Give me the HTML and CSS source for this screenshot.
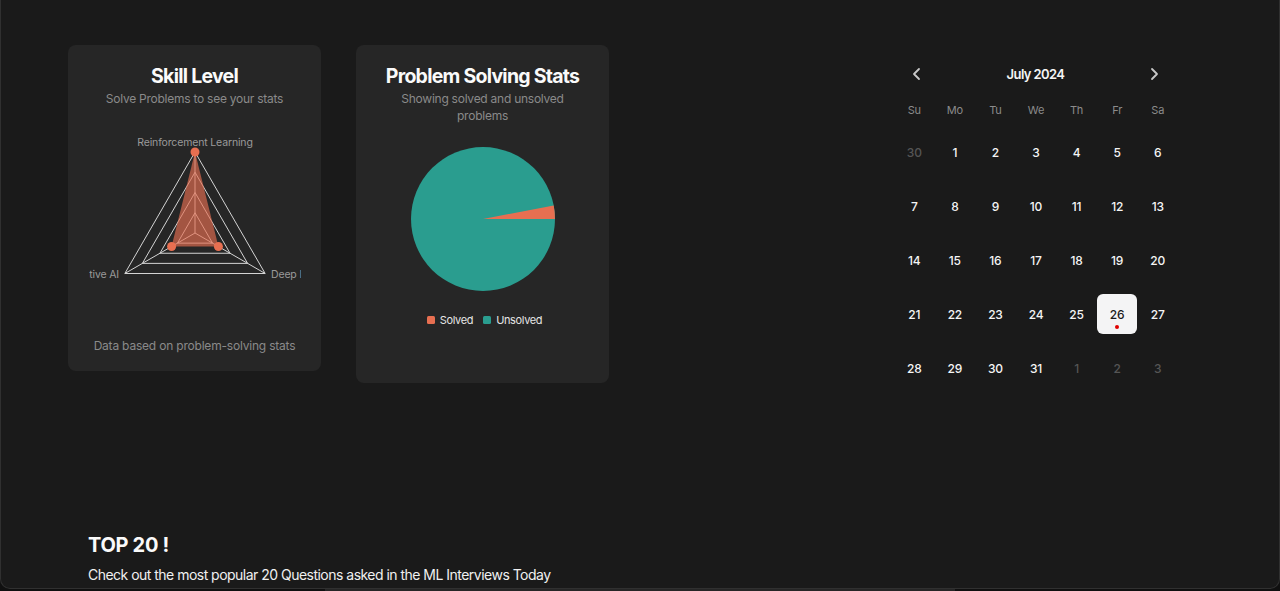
FILE: index.html
```html
<!DOCTYPE html>
<html lang="en">
<head>
<meta charset="utf-8">
<title>Dashboard</title>
<link rel="stylesheet" href="styles.css">
</head>
<body>
<div class="panel">
  <div class="top-row">
    <section class="card card-skill">
      <h2 class="card-title">Skill Level</h2>
      <p class="card-sub">Solve Problems to see your stats</p>
      <svg class="radar" width="212" height="180" viewBox="0 0 212 180">
        <g class="grid">
          <polygon points="106,32 35.85,153.5 176.15,153.5"/>
          <polygon points="106,52.25 53.39,143.38 158.61,143.38"/>
          <polygon points="106,72.5 70.93,133.25 141.07,133.25"/>
          <polygon points="106,92.75 88.46,123.13 123.54,123.13"/>
          <line x1="106" y1="113" x2="106" y2="32"/>
          <line x1="106" y1="113" x2="35.85" y2="153.5"/>
          <line x1="106" y1="113" x2="176.15" y2="153.5"/>
        </g>
        <polygon class="area" points="106,32 82.6,126.5 129.4,126.5"/>
        <circle class="dot" cx="106" cy="32" r="4.5"/>
        <circle class="dot" cx="82.6" cy="126.5" r="4.5"/>
        <circle class="dot" cx="129.4" cy="126.5" r="4.5"/>
        <text class="axis-label" x="106" y="25.5" text-anchor="middle">Reinforcement Learning</text>
        <text class="axis-label" x="30" y="158" text-anchor="end">Generative AI</text>
        <text class="axis-label" x="182" y="158" text-anchor="start">Deep Learning</text>
      </svg>
      <p class="card-foot">Data based on problem-solving stats</p>
    </section>
    <section class="card card-pie">
      <h2 class="card-title">Problem Solving Stats</h2>
      <p class="card-sub narrow">Showing solved and unsolved problems</p>
      <svg class="pie" width="200" height="160" viewBox="0 0 200 160">
        <circle cx="100" cy="80" r="72" fill="#2a9d8f"/>
        <path d="M100 80 L172 80 A72 72 0 0 0 170.7 66.5 Z" fill="#e76f51"/>
      </svg>
      <div class="legend">
        <span class="legend-item"><i class="swatch swatch-solved"></i>Solved</span>
        <span class="legend-item"><i class="swatch swatch-unsolved"></i>Unsolved</span>
      </div>
    </section>
    <section class="calendar">
      <div class="cal-head">
        <button class="nav-btn" aria-label="Previous month">
          <svg width="16" height="16" viewBox="0 0 16 16"><path d="M10 3 L5 8 L10 13" /></svg>
        </button>
        <span class="cal-month">July 2024</span>
        <button class="nav-btn" aria-label="Next month">
          <svg width="16" height="16" viewBox="0 0 16 16"><path d="M6 3 L11 8 L6 13" /></svg>
        </button>
      </div>
      <div class="cal-weekdays">
        <span>Su</span><span>Mo</span><span>Tu</span><span>We</span><span>Th</span><span>Fr</span><span>Sa</span>
      </div>
      <div class="cal-days">
        <span class="day outside">30</span><span class="day">1</span><span class="day">2</span><span class="day">3</span><span class="day">4</span><span class="day">5</span><span class="day">6</span>
        <span class="day">7</span><span class="day">8</span><span class="day">9</span><span class="day">10</span><span class="day">11</span><span class="day">12</span><span class="day">13</span>
        <span class="day">14</span><span class="day">15</span><span class="day">16</span><span class="day">17</span><span class="day">18</span><span class="day">19</span><span class="day">20</span>
        <span class="day">21</span><span class="day">22</span><span class="day">23</span><span class="day">24</span><span class="day">25</span><span class="day today">26<i class="today-dot"></i></span><span class="day">27</span>
        <span class="day">28</span><span class="day">29</span><span class="day">30</span><span class="day">31</span><span class="day outside">1</span><span class="day outside">2</span><span class="day outside">3</span>
      </div>
    </section>
  </div>
  <section class="top20">
    <h2 class="top20-title">TOP 20 !</h2>
    <p class="top20-text">Check out the most popular 20 Questions asked in the ML Interviews Today</p>
  </section>
</div>
<div class="under">
  <div class="under-bar"></div>
</div>
</body>
</html>
```
FILE: styles.css
```css
* { box-sizing: border-box; }
html, body { margin: 0; padding: 0; }
body {
  background: #101010;
  font-family: Inter, "Noto Sans", sans-serif;
  color: #fafafa;
  height: 591px;
  overflow: hidden;
}
.panel {
  height: 589px;
  background: #1a1a1a;
  border: 1px solid #303030;
  border-top: none;
  border-radius: 0 0 10px 10px;
  overflow: hidden;
  padding: 45px 101px 0 67px;
}
.top-row {
  display: flex;
  align-items: flex-start;
  gap: 35px;
}
.card {
  width: 253px;
  background: #262626;
  border-radius: 8px;
  display: flex;
  flex-direction: column;
  align-items: center;
  padding-top: 18px;
}
.card-skill { height: 326px; }
.card-pie { height: 338px; }
.card-title {
  margin: 0;
  font-size: 19.5px;
  line-height: 27px;
  font-weight: 700;
  letter-spacing: -0.75px;
  color: #fafafa;
}
.card-sub {
  margin: 0;
  font-size: 12px;
  line-height: 17px;
  letter-spacing: -0.25px;
  color: #8a8a8a;
  text-align: center;
}
.card-sub.narrow { width: 190px; }
.radar {
  display: block;
  margin-top: 13px;
  overflow: hidden;
}
.grid polygon, .grid line {
  fill: none;
  stroke: #d4d4d4;
  stroke-width: 1;
}
.area {
  fill: #e76f51;
  fill-opacity: 0.65;
}
.dot { fill: #e76f51; }
.axis-label {
  font-family: Inter, "Noto Sans", sans-serif;
  font-size: 10.5px;
  letter-spacing: -0.15px;
  fill: #9a9a9a;
}
.card-foot {
  margin: 37px 0 0;
  font-size: 12px;
  line-height: 17px;
  letter-spacing: -0.2px;
  color: #8a8a8a;
}
.pie {
  display: block;
  margin-top: 15px;
}
.legend {
  display: flex;
  gap: 10px;
  margin-top: 13px;
  font-size: 11px;
  line-height: 16px;
  letter-spacing: -0.35px;
  color: #e5e5e5;
  padding-left: 4px;
}
.legend-item {
  display: flex;
  align-items: center;
  gap: 5px;
}
.swatch {
  width: 8px;
  height: 8px;
  border-radius: 1.5px;
  display: inline-block;
}
.swatch-solved { background: #e76f51; }
.swatch-unsolved { background: #2a9d8f; }

.calendar {
  margin-left: auto;
  width: 284px;
  padding-top: 17px;
}
.cal-head {
  height: 24px;
  display: flex;
  align-items: center;
  justify-content: space-between;
  padding: 0 16px 0 15px;
}
.nav-btn {
  background: none;
  border: none;
  padding: 0;
  width: 16px;
  height: 16px;
  display: flex;
  cursor: pointer;
}
.nav-btn path {
  fill: none;
  stroke: #c8c8c8;
  stroke-width: 1.8;
  stroke-linecap: round;
  stroke-linejoin: round;
}
.cal-month {
  font-size: 13px;
  font-weight: 600;
  letter-spacing: -0.6px;
  color: #f5f5f5;
}
.cal-weekdays {
  margin-top: 12px;
  display: grid;
  grid-template-columns: repeat(7, 1fr);
  height: 24px;
  align-items: center;
  justify-items: center;
  font-size: 11px;
  letter-spacing: -0.2px;
  color: #8b8b8b;
}
.cal-days {
  margin-top: 10px;
  display: grid;
  grid-template-columns: repeat(7, 1fr);
  row-gap: 14px;
  justify-items: center;
}
.day {
  position: relative;
  width: 40px;
  height: 40px;
  display: flex;
  align-items: center;
  justify-content: center;
  font-size: 12px;
  font-weight: 500;
  letter-spacing: -0.2px;
  color: #f5f5f5;
  border-radius: 6px;
}
.day.outside { color: #555; }
.day.today {
  background: #f4f4f5;
  color: #1a1a1a;
}
.today-dot {
  position: absolute;
  left: 18px;
  bottom: 5px;
  width: 4px;
  height: 4px;
  border-radius: 50%;
  background: #e00000;
}
.top20 {
  margin-top: 143px;
  padding-left: 20px;
}
.top20-title {
  margin: 0;
  font-size: 20px;
  line-height: 28px;
  font-weight: 700;
  letter-spacing: -0.3px;
}
.top20-text {
  margin: 6px 0 0;
  font-size: 14px;
  line-height: 20px;
  letter-spacing: -0.52px;
  color: #f0f0f0;
}
.under {
  height: 2px;
}
.under-bar {
  margin-left: 325px;
  width: 630px;
  height: 2px;
  background: #262626;
}
```
